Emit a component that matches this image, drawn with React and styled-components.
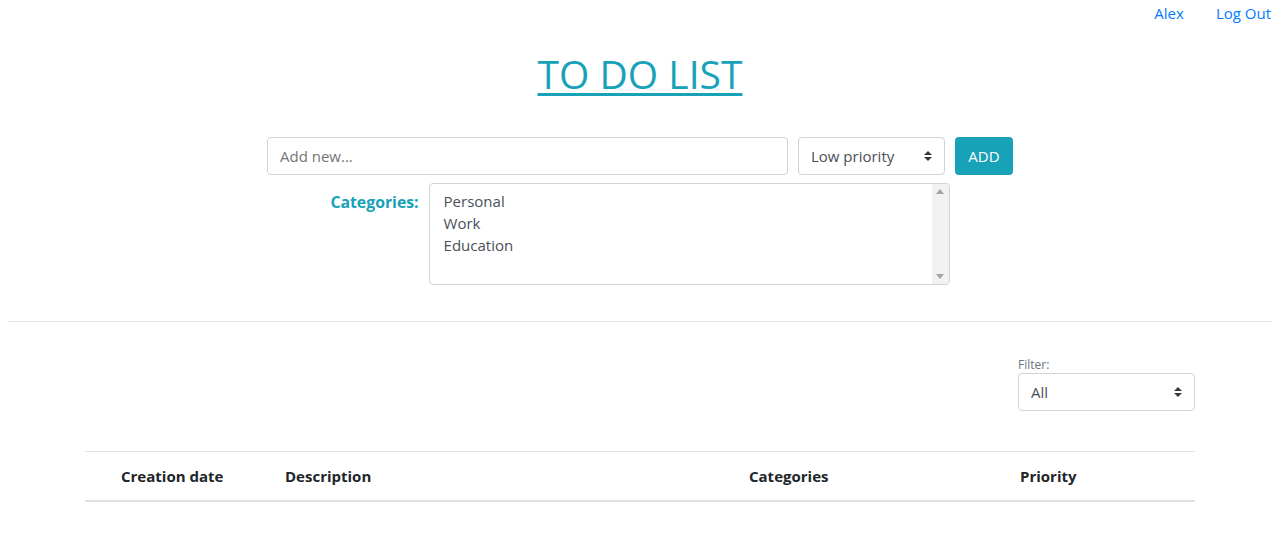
import React, { useState } from "react";
import styled, { createGlobalStyle } from "styled-components";

const GlobalStyle = createGlobalStyle`
  html {
    overflow-x: hidden;
  }
  body {
    margin: 0 8px 8px;
    width: 1264px;
    font-family: "Open Sans", "Noto Sans", sans-serif;
    font-size: 16px;
    color: #212529;
    background: #fff;
  }
  * {
    box-sizing: border-box;
  }
`;

const caret = `url("data:image/svg+xml,%3csvg xmlns='http://www.w3.org/2000/svg' width='4' height='5' viewBox='0 0 4 5'%3e%3cpath fill='%23343a40' d='M2 0L0 2h4zm0 5L0 3h4z'/%3e%3c/svg%3e")`;

export const Nav = styled.div`
  display: flex;
  justify-content: flex-end;
  gap: 32px;
  padding-top: 1px;
  padding-right: 1px;
  a {
    color: #007bff;
    text-decoration: none;
    line-height: 24px;
    font-size: 15px;
  }
`;

export const Title = styled.h1`
  margin: 25px 0 0;
  text-align: center;
  font-size: 39px;
  font-weight: 500;
  line-height: 48px;
  a {
    color: #17a2b8;
    text-decoration: underline;
    text-decoration-thickness: 3px;
    text-underline-offset: 4px;
  }
`;

export const FormRow = styled.div`
  display: flex;
  justify-content: center;
  gap: 10px;
  margin-top: 39px;
`;

export const TextInput = styled.input`
  width: 521px;
  height: 38px;
  padding: 6px 12px;
  border: 1px solid #ced4da;
  border-radius: 4px;
  font: inherit;
  font-size: 15px;
  color: #495057;
  outline: none;
  ::placeholder {
    color: #6c757d;
  }
`;

export const Select = styled.select`
  appearance: none;
  width: ${(p) => p.w}px;
  height: 38px;
  padding: 6px 28px 6px 12px;
  border: 1px solid #ced4da;
  border-radius: 4px;
  background: #fff ${caret} no-repeat right 12px center / 8px 10px;
  font: inherit;
  font-size: 15px;
  color: #495057;
  outline: none;
`;

export const AddButton = styled.button`
  width: 58px;
  height: 38px;
  border: none;
  border-radius: 4px;
  background: #17a2b8;
  color: #fff;
  font: inherit;
  font-size: 15px;
`;

export const CategoryRow = styled.div`
  display: flex;
  justify-content: center;
  gap: 10px;
  margin-top: 8px;
`;

export const Label = styled.label`
  color: #17a2b8;
  font-weight: 700;
  font-size: 15.8px;
  line-height: 22px;
  padding-top: 8px;
`;

export const ListBox = styled.div`
  display: flex;
  width: 521px;
  height: 102px;
  border: 1px solid #ced4da;
  border-radius: 4px;
  overflow: hidden;
`;

export const Options = styled.ul`
  flex: 1;
  margin: 0;
  padding: 6px 14px;
  list-style: none;
  li {
    font-size: 15px;
    line-height: 22px;
    color: #495057;
  }
`;

export const ScrollTrack = styled.div`
  width: 17px;
  background: #f1f1f1;
  display: flex;
  flex-direction: column;
  justify-content: space-between;
  align-items: center;
  padding: 5px 0;
`;

const Arrow = ({ down }) => (
  <svg width="8" height="5" viewBox="0 0 8 5">
    <path d={down ? "M0 0h8L4 5z" : "M4 0L8 5H0z"} fill="#a3a3a3" />
  </svg>
);

export const Divider = styled.hr`
  margin: 36px 0 0;
  border: 0;
  border-top: 1px solid rgba(0, 0, 0, 0.1);
`;

export const Container = styled.div`
  width: 1110px;
  margin: 0 auto;
`;

export const FilterBox = styled.div`
  display: flex;
  flex-direction: column;
  align-items: flex-end;
  margin-top: 35px;
  div {
    width: 177px;
  }
  span {
    display: block;
    font-size: 12px;
    line-height: 16px;
    color: #6c757d;
  }
`;

export const Table = styled.table`
  width: 100%;
  margin-top: 40px;
  border-collapse: collapse;
  table-layout: fixed;
  th {
    text-align: left;
    padding: 12px;
    font-size: 15px;
    font-weight: 700;
    line-height: 24px;
    border-top: 1px solid #dee2e6;
    border-bottom: 2px solid #dee2e6;
  }
`;

export default function App() {
  const [text, setText] = useState("");

  return (
    <>
      <GlobalStyle />
      <Nav>
        <a href="#">Alex</a>
        <a href="#">Log Out</a>
      </Nav>
      <Title>
        <a href="#">TO DO LIST</a>
      </Title>
      <FormRow>
        <TextInput
          placeholder="Add new..."
          value={text}
          onChange={(e) => setText(e.target.value)}
        />
        <Select w={147} defaultValue="low">
          <option value="low">Low priority</option>
          <option value="medium">Medium priority</option>
          <option value="high">High priority</option>
        </Select>
        <AddButton>ADD</AddButton>
      </FormRow>
      <CategoryRow>
        <Label>Categories:</Label>
        <ListBox>
          <Options>
            <li>Personal</li>
            <li>Work</li>
            <li>Education</li>
          </Options>
          <ScrollTrack>
            <Arrow />
            <Arrow down />
          </ScrollTrack>
        </ListBox>
      </CategoryRow>
      <Divider />
      <Container>
        <FilterBox>
          <div>
            <span>Filter:</span>
            <Select w={177} defaultValue="all">
              <option value="all">All</option>
            </Select>
          </div>
        </FilterBox>
        <Table>
          <colgroup>
            <col style={{ width: 24 }} />
            <col style={{ width: 164 }} />
            <col style={{ width: 464 }} />
            <col style={{ width: 271 }} />
            <col style={{ width: 187 }} />
          </colgroup>
          <thead>
            <tr>
              <th></th>
              <th>Creation date</th>
              <th>Description</th>
              <th>Categories</th>
              <th>Priority</th>
            </tr>
          </thead>
        </Table>
      </Container>
    </>
  );
}
